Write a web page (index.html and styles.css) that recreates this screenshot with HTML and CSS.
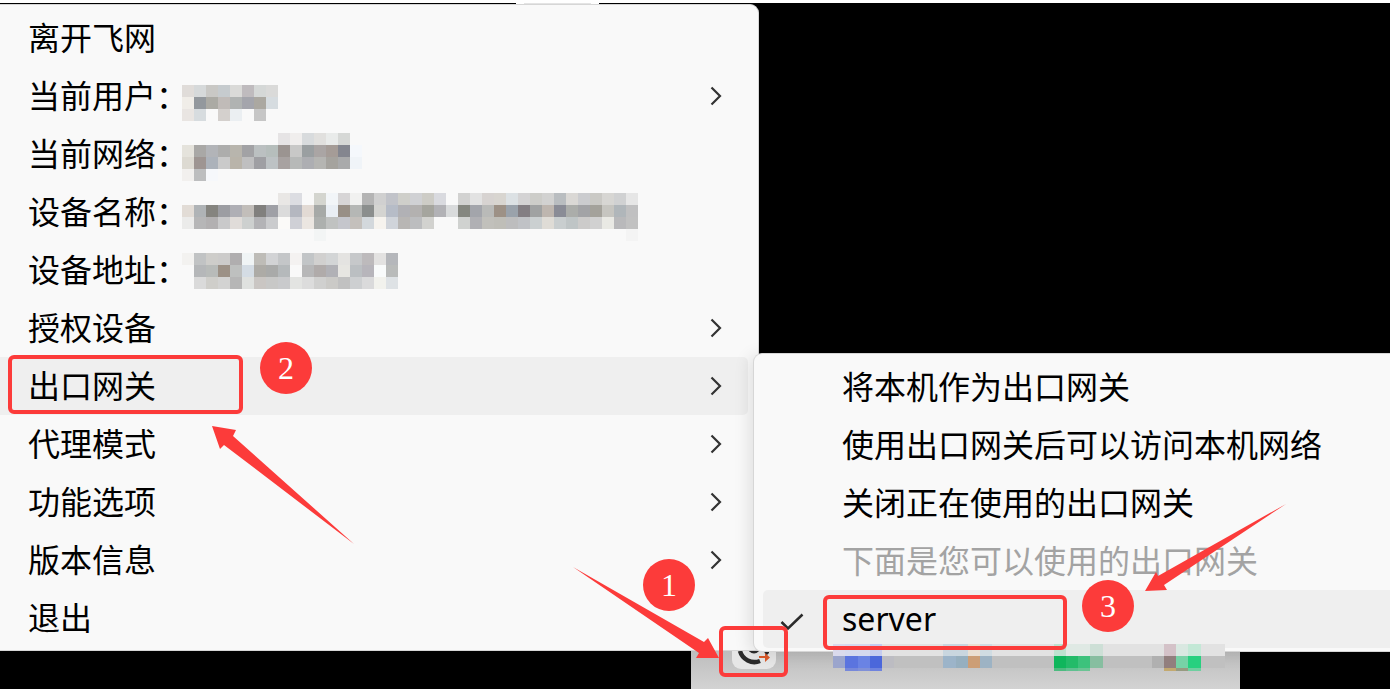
FILE: index.html
```html
<!DOCTYPE html>
<html lang="zh-CN">
<head>
<meta charset="utf-8">
<title>飞网</title>
<link rel="stylesheet" href="styles.css">
</head>
<body>
<svg class="defs" aria-hidden="true">
  <symbol id="chevron" viewBox="0 0 12 20"><path d="M1.5 1.5 10 10 1.5 18.5" fill="none" stroke="#333" stroke-width="2.2"/></symbol>
</svg>
<main class="desktop">
  <div class="tab"></div>

  <div class="tray">
    <svg class="tray-icon" viewBox="0 0 44 44" aria-label="飞网">
      <rect width="44" height="44" rx="9" fill="#e6e6e6"/>
      <circle cx="22" cy="22" r="6.5" fill="#2b2b2b"/>
      <path d="M8 26a15 15 0 0 0 20 10" fill="none" stroke="#2b2b2b" stroke-width="4.5"/>
      <path d="M34 31l3-3v-3l-5 1z" fill="#2b2b2b"/>
      <path d="M27 31h6v-3l5 4.500-5 4.500v-4h-6z" fill="#dc5a2a"/>
    </svg>
  </div>

  <div class="menu main-menu" role="menu" aria-label="飞网">
    <button class="item" role="menuitem">离开飞网</button>
    <button class="item" role="menuitem"><span class="label">当前用户：</span><svg class="mosaic user" data-mosaic="user"></svg><svg class="arrow"><use href="#chevron"/></svg></button>
    <button class="item" role="menuitem"><span class="label">当前网络：</span><svg class="mosaic network" data-mosaic="network"></svg></button>
    <button class="item" role="menuitem"><span class="label">设备名称：</span><svg class="mosaic device" data-mosaic="device"></svg></button>
    <button class="item" role="menuitem"><span class="label">设备地址：</span><svg class="mosaic address" data-mosaic="address"></svg></button>
    <button class="item" role="menuitem">授权设备<svg class="arrow"><use href="#chevron"/></svg></button>
    <button class="item active" role="menuitem" aria-expanded="true">出口网关<svg class="arrow"><use href="#chevron"/></svg></button>
    <button class="item" role="menuitem">代理模式<svg class="arrow"><use href="#chevron"/></svg></button>
    <button class="item" role="menuitem">功能选项<svg class="arrow"><use href="#chevron"/></svg></button>
    <button class="item" role="menuitem">版本信息<svg class="arrow"><use href="#chevron"/></svg></button>
    <button class="item" role="menuitem">退出</button>
  </div>

  <div class="menu sub-menu" role="menu" aria-label="出口网关">
    <button class="item" role="menuitem">将本机作为出口网关</button>
    <button class="item" role="menuitem">使用出口网关后可以访问本机网络</button>
    <button class="item" role="menuitem">关闭正在使用的出口网关</button>
    <button class="item" role="menuitem" disabled>下面是您可以使用的出口网关</button>
    <button class="item active" role="menuitemcheckbox" aria-checked="true"><svg class="check" viewBox="0 0 24 18"><path d="M1.500 9 8 15.500 22.500 1.500" fill="none" stroke="#2b2b2b" stroke-width="2.500"/></svg>server</button>
  </div>

  <svg class="tray-mosaic" data-mosaic="tray" preserveAspectRatio="none"></svg>

  <svg class="pointers" aria-hidden="true">
    <path d="M573 564 704 639 708 635 719 655 696 655 699 650z"/>
    <path d="M212 423 236 427 233 433 354 541 224 442 220 446z"/>
    <path d="M1286 501 1158 573 1156 569 1145 588 1167 587 1164 582z"/>
  </svg>
  <div class="frame frame-1"></div>
  <div class="frame frame-2"></div>
  <div class="frame frame-3"></div>
  <span class="badge badge-1">1</span>
  <span class="badge badge-2">2</span>
  <span class="badge badge-3">3</span>
</main>
<script src="mosaic.js"></script>
</body>
</html>
```
FILE: styles.css
```css
* { box-sizing: border-box; }

body {
  margin: 0;
  padding: 3px 0;
  background: #fff;
  color: #000;
  font-family: "Noto Sans", "Noto Sans CJK SC", sans-serif;
}

.defs { position: absolute; width: 0; height: 0; }

.desktop {
  position: relative;
  min-height: calc(100vh - 6px);
  padding-top: 1px;
  background: #000;
  overflow: hidden;
}

.tab {
  position: absolute;
  top: 0;
  left: 516px;
  width: 83px;
  height: 4px;
  border: solid #fff;
  border-width: 0 8px;
  background: #e4e4e4;
}

.menu {
  display: flex;
  flex-direction: column;
  background: #f9f9f9;
  border: 1px solid #d6d6d6;
}

.main-menu {
  position: relative;
  width: 759px;
  padding: 4px 10px 3px 0;
  border-left: 0;
  border-radius: 0 9px 0 0;
}

.sub-menu {
  position: absolute;
  top: 350px;
  left: 753px;
  right: 0;
  padding: 4px 0 3px 9px;
  border-right: 0;
  border-radius: 9px 0 0 9px;
  box-shadow: -4px 2px 16px rgba(0, 0, 0, 0.1);
}

.item {
  display: flex;
  align-items: center;
  height: 58px;
  padding: 0 26px 0 28px;
  border: 0;
  border-radius: 0 5px 5px 0;
  background: none;
  color: #000;
  font: inherit;
  font-size: 32px;
  line-height: 58px;
  text-align: left;
  white-space: nowrap;
}

.sub-menu .item {
  position: relative;
  padding: 0 0 0 79px;
  border-radius: 5px 0 0 5px;
}

.item.active { background: #efefef; }
.item:disabled { color: #a3a3a3; }

.label { width: 154px; }

.arrow {
  width: 12px;
  height: 20px;
  margin-left: auto;
}

.check {
  position: absolute;
  left: 17px;
  top: 23px;
  width: 24px;
  height: 18px;
}

.mosaic { align-self: flex-start; flex: none; }
.user { margin-top: 18px; }
.network { margin-top: 8px; }
.device { margin-top: 10px; }
.address { margin-top: 12px; }

.tray {
  position: absolute;
  left: 691px;
  bottom: 0;
  width: 549px;
  height: 39px;
  background: linear-gradient(#bcbcbc, #d3d3d3);
}

.tray-icon {
  position: absolute;
  left: 41px;
  bottom: 20px;
  width: 44px;
  height: 44px;
}

.tray-mosaic {
  position: absolute;
  left: 833px;
  top: 641px;
  width: 392px;
  height: 27px;
}

.pointers {
  position: absolute;
  inset: 0;
  width: 100%;
  height: 100%;
  fill: #fc3b3a;
  pointer-events: none;
}

.frame {
  position: absolute;
  border: 4px solid #fc3b3a;
  border-radius: 6px;
  pointer-events: none;
}
.frame-1 { left: 719px; top: 623px; width: 69px; height: 51px; }
.frame-2 { left: 8px; top: 352px; width: 235px; height: 59px; }
.frame-3 { left: 823px; top: 592px; width: 244px; height: 55px; }

.badge {
  position: absolute;
  width: 52px;
  height: 52px;
  border-radius: 50%;
  background: #fc3b3a;
  color: #fff;
  font: 32px/52px "Liberation Serif", serif;
  text-align: center;
}
.badge-1 { left: 643px; top: 556px; }
.badge-2 { left: 260px; top: 339px; }
.badge-3 { left: 1082px; top: 577px; }
```
FILE: mosaic.js
```js
// Each mosaic is a list of rows; "-" is an empty cell and "-n" a run of n.
const mosaics = {
  user: { cols: 8, heights: [12, 12, 12], rows: [
    'e0dcd9 d6d9da c9c8c5 c6cbce dadad8 bfbbbe d5d8d7 dadad9',
    'f0ede8 93989d abaaa4 c0bbb8 b0b3b2 a4a5ac aba8a1 d6dce0',
    'e9e5e2 d7dcdf - d4d0cd ebeff2 - c6c6c6'
  ] },
  network: { cols: 15, heights: [12, 12, 12, 12], rows: [
    '-8 e6e4e5 f0eeed d8dbdd e1e0de e9ebea d6d8d6',
    'e5e3dc a9a8a6 b2b4b8 adadac b8b5ad a2a2a5 bbc0c1 b6bebc 9b9491 c8c8c7 9a9fa1 aaa5a4 a59c97 84868f f5f8fc',
    'dddad2 9e9592 acb2ba cacaca b9b4aa bfbfc0 9f9fa3 bdc2c4 a8a2a1 b7b9b8 adaeb2 b5b5b2 a5a39e a9aaab f0f4f8',
    'f2f0ee bdbebf f6f8fb'
  ] },
  device: { cols: 38, heights: [12, 12, 12, 12], rows: [
    '-8 e9e7e5 dcdde2 - d4d5cf f2f5f8 d7d5d6 f1f1f0 b4b4b4 d0d0d0 c1c3c9 cfcfca d0d1d4 cdccc6 d9dadf - d2d2d1 e2e2e2 d7d3d1 d8d5d0 dce1e4 d4d3d4 cdcdc9 d2d2d1 b9bdc0 dad8d5 cbcccf cac9c5 d7d6d3 d0d1d2 e6e6e6',
    'e2dcd6 afb3b6 85847f 9c9da2 afafb5 c2beba 81807e 9fa0a6 dbdbdb b4b7c0 e2dad4 a6a9a7 e9eef4 988f86 b5b7b5 8b8e8d d4d4d1 b6bcc7 b1b1b5 b3b1b0 a5a59e b2b2b6 d9dbdc 858780 a3a5ab b9bab8 9d9186 9aa2ab 837e83 a0a2a2 beb6af 8a8c96 abadaa a2a3a6 a4a29b c6c5c0 b0b6ba c0c0c1',
    'ebebea b6b6b7 b2b0b1 c9c9ca e0dcd9 cdd0cf b3b3b6 cacbcd fbfaf8 cfd0d6 ebe6e1 adb0ae c0c2c1 c5c6cc c4c0bc d3d8dc f6f3ee d0d4da b8b6b4 bcbdbf d2d2cf -2 d0d2d0 b0b0b4 c1c0bb bfbeb8 bdbdbe c0c2c6 cbd0d1 dfdcd6 c9cecf bfc5c6 cccbca d1d1d1 e9e9e4 b9b9bb c1c1c1',
    '-11 f3f5f5 -25 f4f4f4'
  ] },
  address: { cols: 18, heights: [12, 12, 12], rows: [
    'f3f2f0 c1c3c4 cecdca cccbca b0aeaf f0f4f5 bebcb7 d2d3d5 c4c6c8 f4f2f1 c2c5c7 d1d0cf d3d5d6 e4e3e1 c6c8ca bdbabc e3e2e1 b5b7bb',
    '- b5b7b9 b8bbb9 9c9186 bec0bf d4dce4 adaba6 a9aaa9 b5b9bb - b7b7b8 b0abaa b1b1b6 e7e6e2 bbbfc2 b7b5bb f9fbfb b9bbba',
    '- dadada cfceca d3d3d2 b6b6b6 dfe1df cac6c3 c8c8c7 c9cacc e3e4e2 dcdcdc d0d0cf cbcac7 c1c1c1 cdcfd1 dadadb f2f2ed dee2e5'
  ] },
  tray: { cols: 32, heights: [12, 12, 3], base: ['e2e2e2', 'c0c0c0', ''], rows: [
    'dadaec d5d9ee d5d9ee c5ccef -5 c9d6df c9d6df eadfd2 d0dce2 -5 bde2cf dfe9e4 dfe9e4 cddfd6 -5 d4c2c8 d9e8e1 c3e8d6 -2',
    '9ba5cc 5b74df 6a83e4 4b67db bcbcc2 -4 9cb4c9 96afbf cc9e76 9db3c4 -5 0fb65c 23bb69 3dc27c 87bea0 -4 b0b0b0 927f7e 77d2a6 27d07f -2',
    '- 7788da 8090d8 6f83de -14 4dbb80 5fc090 6bc494 -6 c3a970 979a80 6fcfa0'
  ] }
};

const NS = 'http://www.w3.org/2000/svg';

function cell(svg, x, y, width, height, color) {
  const rect = document.createElementNS(NS, 'rect');
  Object.entries({ x, y, width, height, fill: '#' + color })
    .forEach(([name, value]) => rect.setAttribute(name, value));
  svg.append(rect);
}

document.querySelectorAll('[data-mosaic]').forEach(svg => {
  const { cols, heights, rows, base = [] } = mosaics[svg.dataset.mosaic];
  const width = cols * 12;
  const height = heights.reduce((sum, h) => sum + h, 0);
  svg.setAttribute('viewBox', `0 0 ${width} ${height}`);
  svg.setAttribute('width', width);
  svg.setAttribute('height', height);
  svg.setAttribute('shape-rendering', 'crispEdges');
  let y = 0;
  rows.forEach((row, i) => {
    if (base[i]) cell(svg, 0, y, width, heights[i], base[i]);
    let x = 0;
    row.split(' ').forEach(token => {
      if (token[0] === '-') {
        x += 12 * (Number(token.slice(1)) || 1);
      } else {
        cell(svg, x, y, 12, heights[i], token);
        x += 12;
      }
    });
    y += heights[i];
  });
});
```
